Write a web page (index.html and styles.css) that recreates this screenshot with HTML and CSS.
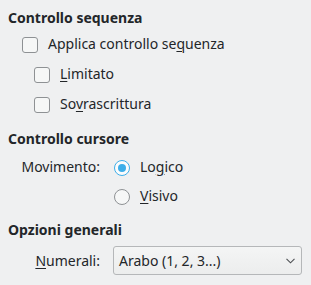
FILE: index.html
```html
<!DOCTYPE html>
<html lang="it">
<head>
  <meta charset="UTF-8">
  <title>Controllo sequenza</title>
  <link rel="stylesheet" href="styles.css">
</head>
<body>

  <div class="page">

    <section class="group">
      <h2 class="group-title">Controllo sequenza</h2>
      <label class="check lvl1"><span class="box"></span><span class="txt">Applica controllo se<u>q</u>uenza</span></label>
      <label class="check lvl2"><span class="box"></span><span class="txt"><u>L</u>imitato</span></label>
      <label class="check lvl2"><span class="box"></span><span class="txt">So<u>v</u>rascrittura</span></label>
    </section>

    <section class="group cursor">
      <h2 class="group-title">Controllo cursore</h2>
      <div class="field radio-row">
        <span class="field-label txt">Movimento:</span>
        <label class="radio"><span class="dot checked"></span><span class="txt">Lo<u>g</u>ico</span></label>
      </div>
      <div class="field radio-row">
        <span class="field-label"></span>
        <label class="radio"><span class="dot"></span><span class="txt"><u>V</u>isivo</span></label>
      </div>
    </section>

    <section class="group general">
      <h2 class="group-title">Opzioni generali</h2>
      <div class="field">
        <span class="field-label"><u>N</u>umerali:</span>
        <div class="combo">
          <span>Arabo (1, 2, 3...)</span>
          <svg class="chevron" width="9" height="6" viewBox="0 0 9 6"><path d="M0.5 0.8 L4.5 4.8 L8.5 0.8" fill="none" stroke="#4d5053" stroke-width="1.1"/></svg>
        </div>
      </div>
    </section>

  </div>

</body>
</html>
```

FILE: styles.css
```css
* {
  margin: 0;
  padding: 0;
  box-sizing: border-box;
}

body {
  font-family: 'Noto Sans', sans-serif;
  font-size: 14px;
  line-height: 19px;
  color: #232629;
  background: #eff0f1;
  width: 311px;
  height: 285px;
  overflow: hidden;
}

.page {
  padding: 8px 0 0 8px;
}

.group-title {
  font-size: 14px;
  font-weight: bold;
  line-height: 19px;
}

u {
  text-decoration-thickness: 1px;
  text-underline-offset: 2px;
}

/* text in check and radio rows sits a little above the row centre */
.txt {
  padding-bottom: 3px;
}

/* checkboxes */

.group {
  display: flex;
  flex-direction: column;
}

.check {
  display: flex;
  align-items: center;
  gap: 10px;
  height: 30px;
}

.group > .check:first-of-type {
  margin-top: 3px;
}

.lvl1 {
  margin-left: 14px;
}

.lvl2 {
  margin-left: 26px;
}

.box {
  width: 16px;
  height: 16px;
  border: 1px solid #8e9194;
  border-radius: 3px;
  background: #f6f7f7;
}

/* cursor group */

.cursor {
  margin-top: 9px;
}

.cursor .group-title {
  margin-bottom: 5px;
}

.field {
  display: flex;
  align-items: center;
  gap: 14px;
}

.field-label {
  width: 92px;
  text-align: right;
}

.radio-row {
  height: 29px;
}

.radio {
  display: flex;
  align-items: center;
  gap: 10px;
}

.dot {
  width: 16px;
  height: 16px;
  border: 1px solid #8e9194;
  border-radius: 50%;
  background: #f6f7f7;
  position: relative;
}

.dot.checked {
  border-color: #3daee9;
  background: #fcfcfc;
}

.dot.checked::after {
  content: '';
  position: absolute;
  top: 3px;
  left: 3px;
  width: 8px;
  height: 8px;
  border-radius: 50%;
  background: #3daee9;
}

/* general group */

.general {
  margin-top: 9px;
}

.general .group-title {
  margin-bottom: 7px;
}

.general .field {
  gap: 13px;
}

.combo {
  width: 189px;
  height: 29px;
  display: flex;
  align-items: center;
  justify-content: space-between;
  padding: 0 6px 0 5px;
  border: 1px solid #b5b7b9;
  border-radius: 3px;
  background: linear-gradient(#f4f5f5, #eceded);
}
```
